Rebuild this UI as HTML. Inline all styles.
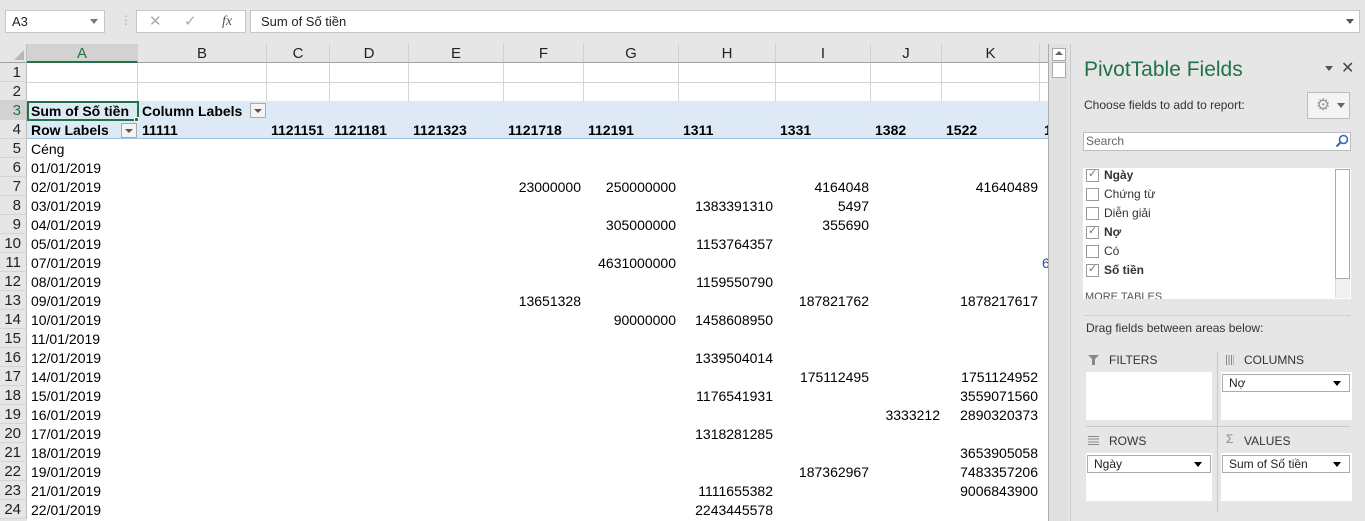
<!DOCTYPE html>
<html><head><meta charset="utf-8"><style>
*{box-sizing:border-box;margin:0;padding:0}
body{width:1365px;height:521px;overflow:hidden;background:#e6e6e6;font-family:"Liberation Sans",sans-serif;position:relative}
.a{position:absolute}
.c{position:absolute;font-size:14px;line-height:19px;height:19px;white-space:nowrap;color:#000}
.r{text-align:right}
.rh{position:absolute;left:0;width:27px;height:19px;line-height:19px;text-align:right;padding-right:5px;font-size:15px;color:#222;background:#e6e6e6;border-bottom:1px solid #d4d4d4;border-right:1px solid #bdbdbd}
.ch{position:absolute;top:44px;height:19px;line-height:19px;text-align:center;font-size:15px;color:#222;border-right:1px solid #d0d0d0;border-bottom:1px solid #a0a0a0}
.lbl{font-size:12px;color:#333}
.cb{position:absolute;width:13px;height:13px;border:1px solid #999;background:#fff;left:1086px}
.dd{position:absolute;height:18px;border:1px solid #ababab;background:#fff;font-size:12px;line-height:16px;padding-left:6px;color:#222}
.dd:after{content:"";position:absolute;right:8px;top:6px;border:4px solid transparent;border-top:5px solid #000}
</style></head><body>
<!-- formula bar -->
<div class="a" style="left:5px;top:10px;width:100px;height:23px;background:#fff;border:1px solid #c6c6c6;font-size:13px;line-height:21px;padding-left:6px;color:#222">A3</div>
<div class="a" style="left:90px;top:19px;border:4px solid transparent;border-top:5px solid #777"></div>
<div class="a" style="left:120px;top:13px;color:#aaa;font-size:12px">⋮</div>
<div class="a" style="left:136px;top:10px;width:110px;height:23px;background:#fff;border:1px solid #c6c6c6;color:#aaa;font-size:15px;line-height:21px"><span style="position:absolute;left:12px">✕</span><span style="position:absolute;left:47px">✓</span><span style="position:absolute;left:85px;font-family:'Liberation Serif';font-style:italic;color:#555;font-size:14px">fx</span></div>
<div class="a" style="left:250px;top:10px;width:1110px;height:23px;background:#fff;border:1px solid #c6c6c6;font-size:13px;line-height:21px;padding-left:10px;color:#222">Sum of Số tiền</div>
<div class="a" style="left:1346px;top:19px;border:4px solid transparent;border-top:5px solid #555"></div>

<!-- grid area -->
<div class="a" style="left:27px;top:63px;width:1021px;height:458px;background:#fff"></div>
<div class="a" style="left:0;top:44px;width:27px;height:19px;background:#e6e6e6;border-right:1px solid #bdbdbd;border-bottom:1px solid #a0a0a0"></div>
<div class="a" style="left:14px;top:50px;border-left:10px solid transparent;border-bottom:10px solid #b8b8b8"></div>
<div class="ch" style="left:27px;width:111px;background:#d2d2d2;color:#217346;border-bottom:2px solid #217346">A</div>
<div class="ch" style="left:138px;width:129px">B</div>
<div class="ch" style="left:267px;width:63px">C</div>
<div class="ch" style="left:330px;width:79px">D</div>
<div class="ch" style="left:409px;width:95px">E</div>
<div class="ch" style="left:504px;width:80px">F</div>
<div class="ch" style="left:584px;width:95px">G</div>
<div class="ch" style="left:679px;width:97px">H</div>
<div class="ch" style="left:776px;width:95px">I</div>
<div class="ch" style="left:871px;width:71px">J</div>
<div class="ch" style="left:942px;width:98px">K</div>
<div class="ch" style="left:1040px;width:8px;border-right:none"></div>
<!-- gridlines rows 1-2 -->
<div class="a" style="left:27px;top:82px;width:1021px;height:1px;background:#d4d4d4"></div>
<div class="a" style="left:27px;top:63px;width:1021px;height:38px;background:
linear-gradient(#d4d4d4,#d4d4d4) 110px 0/1px 100% no-repeat,
linear-gradient(#d4d4d4,#d4d4d4) 239px 0/1px 100% no-repeat,
linear-gradient(#d4d4d4,#d4d4d4) 302px 0/1px 100% no-repeat,
linear-gradient(#d4d4d4,#d4d4d4) 381px 0/1px 100% no-repeat,
linear-gradient(#d4d4d4,#d4d4d4) 476px 0/1px 100% no-repeat,
linear-gradient(#d4d4d4,#d4d4d4) 556px 0/1px 100% no-repeat,
linear-gradient(#d4d4d4,#d4d4d4) 651px 0/1px 100% no-repeat,
linear-gradient(#d4d4d4,#d4d4d4) 748px 0/1px 100% no-repeat,
linear-gradient(#d4d4d4,#d4d4d4) 843px 0/1px 100% no-repeat,
linear-gradient(#d4d4d4,#d4d4d4) 914px 0/1px 100% no-repeat,
linear-gradient(#d4d4d4,#d4d4d4) 1012px 0/1px 100% no-repeat"></div>
<!-- pivot header -->
<div class="a" style="left:27px;top:101px;width:1021px;height:38px;background:#dde9f5;border-bottom:1px solid #9dbfe0"></div>
<div class="a" style="left:27px;top:101px;width:112px;height:20px;border:2px solid #217346"></div>
<div class="a" style="left:134px;top:117px;width:5px;height:5px;background:#217346;border:1px solid #fff"></div>
<div class="c" style="left:31px;top:102px;font-weight:bold">Sum of Số tiền</div>
<div class="c" style="left:142px;top:102px;font-weight:bold">Column Labels</div>
<div class="a" style="left:250px;top:103px;width:16px;height:15px;border:1px solid #aaa;background:#f4f4f4"></div><div class="a" style="left:254px;top:109px;border:4px solid transparent;border-top:4px solid #555"></div>
<div class="c" style="left:31px;top:121px;font-weight:bold">Row Labels</div>
<div class="a" style="left:121px;top:123px;width:16px;height:15px;border:1px solid #aaa;background:#f4f4f4"></div><div class="a" style="left:125px;top:129px;border:4px solid transparent;border-top:4px solid #555"></div>
<div class="c" style="left:142px;top:121px;font-weight:bold">11111</div>
<div class="c" style="left:271px;top:121px;font-weight:bold">1121151</div>
<div class="c" style="left:334px;top:121px;font-weight:bold">1121181</div>
<div class="c" style="left:413px;top:121px;font-weight:bold">1121323</div>
<div class="c" style="left:508px;top:121px;font-weight:bold">1121718</div>
<div class="c" style="left:588px;top:121px;font-weight:bold">112191</div>
<div class="c" style="left:683px;top:121px;font-weight:bold">1311</div>
<div class="c" style="left:780px;top:121px;font-weight:bold">1331</div>
<div class="c" style="left:875px;top:121px;font-weight:bold">1382</div>
<div class="c" style="left:946px;top:121px;font-weight:bold">1522</div>
<div class="c" style="left:1044px;top:121px;font-weight:bold">1</div>

<!-- row headers -->
<div class="rh" style="top:63px">1</div><div class="rh" style="top:82px">2</div>
<div class="rh" style="top:101px;background:#d2d2d2;color:#217346">3</div><div class="rh" style="top:120px">4</div>
<div class="rh" style="top:139px">5</div><div class="rh" style="top:158px">6</div><div class="rh" style="top:177px">7</div><div class="rh" style="top:196px">8</div><div class="rh" style="top:215px">9</div><div class="rh" style="top:234px">10</div><div class="rh" style="top:253px">11</div><div class="rh" style="top:272px">12</div><div class="rh" style="top:291px">13</div><div class="rh" style="top:310px">14</div><div class="rh" style="top:329px">15</div><div class="rh" style="top:348px">16</div><div class="rh" style="top:367px">17</div><div class="rh" style="top:386px">18</div><div class="rh" style="top:405px">19</div><div class="rh" style="top:424px">20</div><div class="rh" style="top:443px">21</div><div class="rh" style="top:462px">22</div><div class="rh" style="top:481px">23</div><div class="rh" style="top:500px">24</div>

<!-- data labels -->
<div class="c" style="left:31px;top:140px">Céng</div>
<div class="c" style="left:31px;top:159px">01/01/2019</div>
<div class="c" style="left:31px;top:178px">02/01/2019</div>
<div class="c" style="left:31px;top:197px">03/01/2019</div>
<div class="c" style="left:31px;top:216px">04/01/2019</div>
<div class="c" style="left:31px;top:235px">05/01/2019</div>
<div class="c" style="left:31px;top:254px">07/01/2019</div>
<div class="c" style="left:31px;top:273px">08/01/2019</div>
<div class="c" style="left:31px;top:292px">09/01/2019</div>
<div class="c" style="left:31px;top:311px">10/01/2019</div>
<div class="c" style="left:31px;top:330px">11/01/2019</div>
<div class="c" style="left:31px;top:349px">12/01/2019</div>
<div class="c" style="left:31px;top:368px">14/01/2019</div>
<div class="c" style="left:31px;top:387px">15/01/2019</div>
<div class="c" style="left:31px;top:406px">16/01/2019</div>
<div class="c" style="left:31px;top:425px">17/01/2019</div>
<div class="c" style="left:31px;top:444px">18/01/2019</div>
<div class="c" style="left:31px;top:463px">19/01/2019</div>
<div class="c" style="left:31px;top:482px">21/01/2019</div>
<div class="c" style="left:31px;top:501px">22/01/2019</div>

<!-- values: right edges F 581, G 676, H 773, I 869, J 940, K 1038 -->
<div class="c r" style="right:784px;top:178px">23000000</div>
<div class="c r" style="right:689px;top:178px">250000000</div>
<div class="c r" style="right:496px;top:178px">4164048</div>
<div class="c r" style="right:327px;top:178px">41640489</div>
<div class="c r" style="right:592px;top:197px">1383391310</div>
<div class="c r" style="right:496px;top:197px">5497</div>
<div class="c r" style="right:689px;top:216px">305000000</div>
<div class="c r" style="right:496px;top:216px">355690</div>
<div class="c r" style="right:592px;top:235px">1153764357</div>
<div class="c r" style="right:689px;top:254px">4631000000</div>
<div class="c" style="left:1042px;top:254px;color:#1f4e9a">6</div>
<div class="c r" style="right:592px;top:273px">1159550790</div>
<div class="c r" style="right:784px;top:292px">13651328</div>
<div class="c r" style="right:496px;top:292px">187821762</div>
<div class="c r" style="right:327px;top:292px">1878217617</div>
<div class="c r" style="right:689px;top:311px">90000000</div>
<div class="c r" style="right:592px;top:311px">1458608950</div>
<div class="c r" style="right:592px;top:349px">1339504014</div>
<div class="c r" style="right:496px;top:368px">175112495</div>
<div class="c r" style="right:327px;top:368px">1751124952</div>
<div class="c r" style="right:592px;top:387px">1176541931</div>
<div class="c r" style="right:327px;top:387px">3559071560</div>
<div class="c r" style="right:425px;top:406px">3333212</div>
<div class="c r" style="right:327px;top:406px">2890320373</div>
<div class="c r" style="right:592px;top:425px">1318281285</div>
<div class="c r" style="right:327px;top:444px">3653905058</div>
<div class="c r" style="right:496px;top:463px">187362967</div>
<div class="c r" style="right:327px;top:463px">7483357206</div>
<div class="c r" style="right:592px;top:482px">1111655382</div>
<div class="c r" style="right:327px;top:482px">9006843900</div>
<div class="c r" style="right:592px;top:501px">2243445578</div>

<!-- vertical scrollbar -->
<div class="a" style="left:1048px;top:44px;width:20px;height:477px;background:#e0e0e0;border-left:1px solid #ababab"></div>
<div class="a" style="left:1052px;top:48px;width:14px;height:13px;background:#fff;border:1px solid #ababab"></div>
<div class="a" style="left:1055px;top:51px;border:4px solid transparent;border-bottom:4px solid #666;border-top:none"></div>
<div class="a" style="left:1052px;top:62px;width:14px;height:16px;background:#fff;border:1px solid #ababab"></div>
<div class="a" style="left:1070px;top:44px;width:1px;height:477px;background:#c8c8c8"></div>

<!-- PivotTable panel -->
<div class="a" style="left:1084px;top:58px;font-size:21px;color:#217346">PivotTable Fields</div>
<div class="a" style="left:1325px;top:66px;border:4px solid transparent;border-top:5px solid #555"></div>
<div class="a" style="left:1341px;top:58px;font-size:16px;color:#444">✕</div>
<div class="a lbl" style="left:1084px;top:98px">Choose fields to add to report:</div>
<div class="a" style="left:1307px;top:92px;width:43px;height:27px;border:1px solid #bdbdbd;background:#f4f4f4;color:#999;font-size:16px;line-height:25px;padding-left:8px">⚙</div>
<div class="a" style="left:1337px;top:103px;border:4px solid transparent;border-top:5px solid #666"></div>
<div class="a" style="left:1083px;top:132px;width:268px;height:19px;background:#fff;border:1px solid #bdbdbd;font-size:12px;line-height:17px;padding-left:2px;color:#666">Search</div>
<svg class="a" style="left:1335px;top:134px" width="14" height="14" viewBox="0 0 14 14"><circle cx="8.5" cy="5.5" r="4" fill="none" stroke="#2e6cb5" stroke-width="1.6"/><path d="M5.5 8.5L1.5 12.5" stroke="#2e6cb5" stroke-width="2"/></svg>
<div class="a" style="left:1083px;top:168px;width:268px;height:131px;background:#fff;overflow:hidden"></div>
<div class="a" style="left:1335px;top:169px;width:15px;height:129px;background:#f0f0f0;border-left:1px solid #ddd"></div>
<div class="a" style="left:1335px;top:169px;width:15px;height:110px;background:#fff;border:1px solid #ababab"></div>
<div class="cb" style="top:169px"></div><div class="a" style="left:1088px;top:167px;font-size:11px;color:#777">✓</div>
<div class="a lbl" style="left:1104px;top:168px;font-weight:bold">Ngày</div>
<div class="cb" style="top:188px"></div><div class="a lbl" style="left:1104px;top:187px">Chứng từ</div>
<div class="cb" style="top:207px"></div><div class="a lbl" style="left:1104px;top:206px">Diễn giải</div>
<div class="cb" style="top:226px"></div><div class="a" style="left:1088px;top:224px;font-size:11px;color:#777">✓</div>
<div class="a lbl" style="left:1104px;top:225px;font-weight:bold">Nợ</div>
<div class="cb" style="top:245px"></div><div class="a lbl" style="left:1104px;top:244px">Có</div>
<div class="cb" style="top:264px"></div><div class="a" style="left:1088px;top:262px;font-size:11px;color:#777">✓</div>
<div class="a lbl" style="left:1104px;top:263px;font-weight:bold">Số tiền</div>
<div class="a" style="left:1085px;top:290px;height:9px;overflow:hidden;font-size:11px;color:#555;line-height:14px">MORE TABLES</div>
<div class="a" style="left:1085px;top:315px;width:265px;border-top:1px dotted #bbb"></div>
<div class="a lbl" style="left:1086px;top:321px">Drag fields between areas below:</div>
<div class="a" style="left:1217px;top:352px;width:1px;height:160px;background:#c8c8c8"></div>
<div class="a" style="left:1086px;top:426px;width:264px;height:1px;background:#c8c8c8"></div>
<div class="a lbl" style="left:1109px;top:353px">FILTERS</div>
<svg class="a" style="left:1088px;top:355px" width="11" height="10"><path d="M0 0H11L7 4V10H4V4Z" fill="#888"/></svg>
<div class="a lbl" style="left:1244px;top:353px">COLUMNS</div>
<div class="a" style="left:1226px;top:355px;width:8px;height:10px;background:repeating-linear-gradient(90deg,#888 0 1px,transparent 1px 2.5px)"></div>
<div class="a lbl" style="left:1109px;top:434px">ROWS</div>
<div class="a" style="left:1088px;top:436px;width:11px;height:9px;background:repeating-linear-gradient(#888 0 1px,transparent 1px 2.7px)"></div>
<div class="a lbl" style="left:1244px;top:434px">VALUES</div>
<div class="a" style="left:1226px;top:432px;font-size:12px;color:#888">Σ</div>
<div class="a" style="left:1086px;top:372px;width:126px;height:48px;background:#fff"></div>
<div class="a" style="left:1221px;top:372px;width:131px;height:48px;background:#fff"></div>
<div class="a" style="left:1086px;top:453px;width:126px;height:48px;background:#fff"></div>
<div class="a" style="left:1221px;top:453px;width:131px;height:48px;background:#fff"></div>
<div class="dd" style="left:1222px;top:374px;width:128px">Nợ</div>
<div class="dd" style="left:1087px;top:455px;width:124px">Ngày</div>
<div class="dd" style="left:1222px;top:455px;width:128px">Sum of Số tiền</div>
</body></html>
